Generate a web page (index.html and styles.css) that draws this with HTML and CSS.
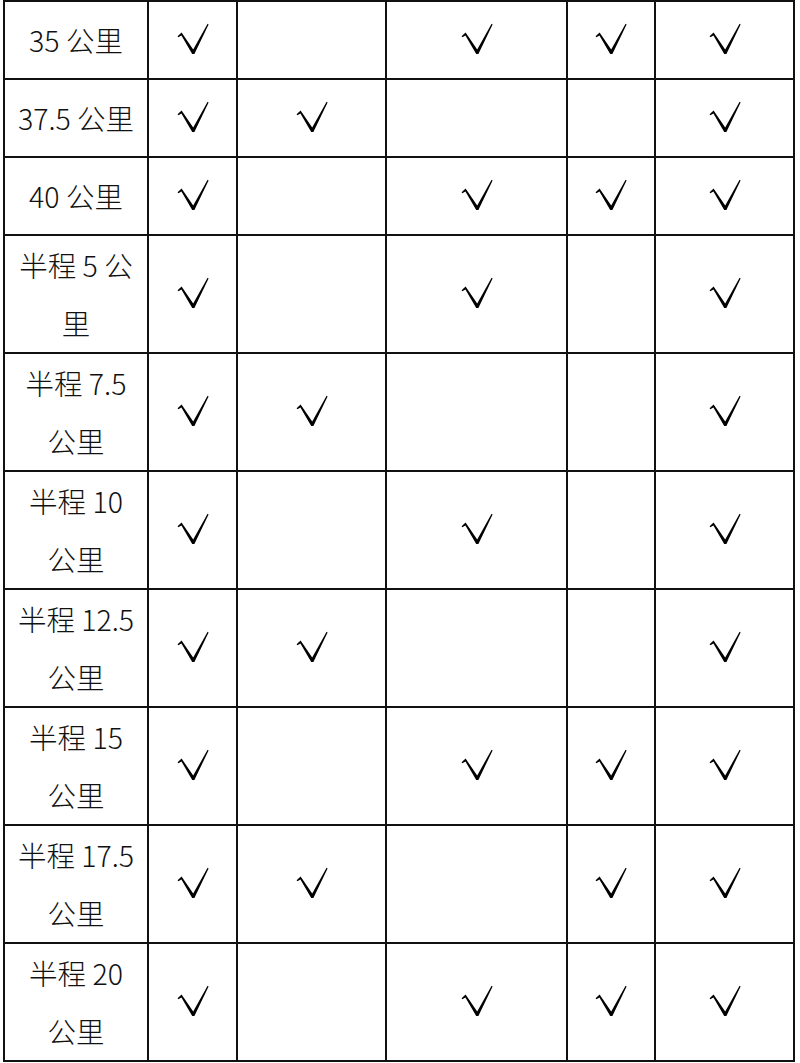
FILE: index.html
```html
<!DOCTYPE html>
<html lang="zh-CN">
<head>
<meta charset="utf-8">
<title>赛事距离</title>
<link rel="stylesheet" href="styles.css">
</head>
<body>
<svg class="defs" width="0" height="0" aria-hidden="true">
  <symbol id="tick" viewBox="0 0 32 32">
    <path d="M0.6 13.2 L4.6 9.6 L16.2 26.4 L30.6 0.8 L31.6 1.4 L17.4 31 L15.2 31 L4.4 12.4 L1.4 14.2 Z"/>
  </symbol>
</svg>
<table class="grid">
  <colgroup>
    <col class="c1"><col class="c2"><col class="c3"><col class="c4"><col class="c5"><col class="c6">
  </colgroup>
  <tbody>
    <tr class="short"><td class="name">35 公里</td><td class="ok"><svg class="tk" role="img" aria-label="√"><use href="#tick"/></svg></td><td></td><td class="ok"><svg class="tk" role="img" aria-label="√"><use href="#tick"/></svg></td><td class="ok"><svg class="tk" role="img" aria-label="√"><use href="#tick"/></svg></td><td class="ok"><svg class="tk" role="img" aria-label="√"><use href="#tick"/></svg></td></tr>
    <tr class="short"><td class="name">37.5 公里</td><td class="ok"><svg class="tk" role="img" aria-label="√"><use href="#tick"/></svg></td><td class="ok"><svg class="tk" role="img" aria-label="√"><use href="#tick"/></svg></td><td></td><td></td><td class="ok"><svg class="tk" role="img" aria-label="√"><use href="#tick"/></svg></td></tr>
    <tr class="short"><td class="name">40 公里</td><td class="ok"><svg class="tk" role="img" aria-label="√"><use href="#tick"/></svg></td><td></td><td class="ok"><svg class="tk" role="img" aria-label="√"><use href="#tick"/></svg></td><td class="ok"><svg class="tk" role="img" aria-label="√"><use href="#tick"/></svg></td><td class="ok"><svg class="tk" role="img" aria-label="√"><use href="#tick"/></svg></td></tr>
    <tr class="tall a"><td class="name">半程 5 公<br>里</td><td class="ok"><svg class="tk" role="img" aria-label="√"><use href="#tick"/></svg></td><td></td><td class="ok"><svg class="tk" role="img" aria-label="√"><use href="#tick"/></svg></td><td></td><td class="ok"><svg class="tk" role="img" aria-label="√"><use href="#tick"/></svg></td></tr>
    <tr class="tall b"><td class="name">半程 7.5<br>公里</td><td class="ok"><svg class="tk" role="img" aria-label="√"><use href="#tick"/></svg></td><td class="ok"><svg class="tk" role="img" aria-label="√"><use href="#tick"/></svg></td><td></td><td></td><td class="ok"><svg class="tk" role="img" aria-label="√"><use href="#tick"/></svg></td></tr>
    <tr class="tall a"><td class="name">半程 10<br>公里</td><td class="ok"><svg class="tk" role="img" aria-label="√"><use href="#tick"/></svg></td><td></td><td class="ok"><svg class="tk" role="img" aria-label="√"><use href="#tick"/></svg></td><td></td><td class="ok"><svg class="tk" role="img" aria-label="√"><use href="#tick"/></svg></td></tr>
    <tr class="tall b"><td class="name">半程 12.5<br>公里</td><td class="ok"><svg class="tk" role="img" aria-label="√"><use href="#tick"/></svg></td><td class="ok"><svg class="tk" role="img" aria-label="√"><use href="#tick"/></svg></td><td></td><td></td><td class="ok"><svg class="tk" role="img" aria-label="√"><use href="#tick"/></svg></td></tr>
    <tr class="tall a"><td class="name">半程 15<br>公里</td><td class="ok"><svg class="tk" role="img" aria-label="√"><use href="#tick"/></svg></td><td></td><td class="ok"><svg class="tk" role="img" aria-label="√"><use href="#tick"/></svg></td><td class="ok"><svg class="tk" role="img" aria-label="√"><use href="#tick"/></svg></td><td class="ok"><svg class="tk" role="img" aria-label="√"><use href="#tick"/></svg></td></tr>
    <tr class="tall b"><td class="name">半程 17.5<br>公里</td><td class="ok"><svg class="tk" role="img" aria-label="√"><use href="#tick"/></svg></td><td class="ok"><svg class="tk" role="img" aria-label="√"><use href="#tick"/></svg></td><td></td><td class="ok"><svg class="tk" role="img" aria-label="√"><use href="#tick"/></svg></td><td class="ok"><svg class="tk" role="img" aria-label="√"><use href="#tick"/></svg></td></tr>
    <tr class="tall a"><td class="name">半程 20<br>公里</td><td class="ok"><svg class="tk" role="img" aria-label="√"><use href="#tick"/></svg></td><td></td><td class="ok"><svg class="tk" role="img" aria-label="√"><use href="#tick"/></svg></td><td class="ok"><svg class="tk" role="img" aria-label="√"><use href="#tick"/></svg></td><td class="ok"><svg class="tk" role="img" aria-label="√"><use href="#tick"/></svg></td></tr>
  </tbody>
</table>
</body>
</html>
```
FILE: styles.css
```css
html, body {
  margin: 0;
  padding: 0;
  background: #ffffff;
}

body {
  padding: 0 0 0 3px;
  font-family: "Noto Sans CJK SC", "Noto Sans", sans-serif;
  color: #111111;
}

.defs {
  position: absolute;
  width: 0;
  height: 0;
  overflow: hidden;
}

.grid {
  border-collapse: collapse;
  table-layout: fixed;
  width: 792px;
}

.c1 { width: 144px; }
.c2 { width: 89px; }
.c3 { width: 149px; }
.c4 { width: 181px; }
.c5 { width: 88px; }
.c6 { width: 139px; }

.grid td {
  border: 2px solid #111111;
  padding: 0;
  text-align: center;
  vertical-align: middle;
}

.short td { height: 76px; }
.tall.a td { height: 116px; }
.tall.b td { height: 115px; }

.name {
  font-size: 28.5px;
  font-weight: 300;
  line-height: 58px;
  letter-spacing: 0;
}

.ok {
  line-height: 0;
  color: #000000;
}

.tk {
  display: inline-block;
  width: 32px;
  height: 32px;
  fill: currentColor;
  margin-top: -2px;
}
```
